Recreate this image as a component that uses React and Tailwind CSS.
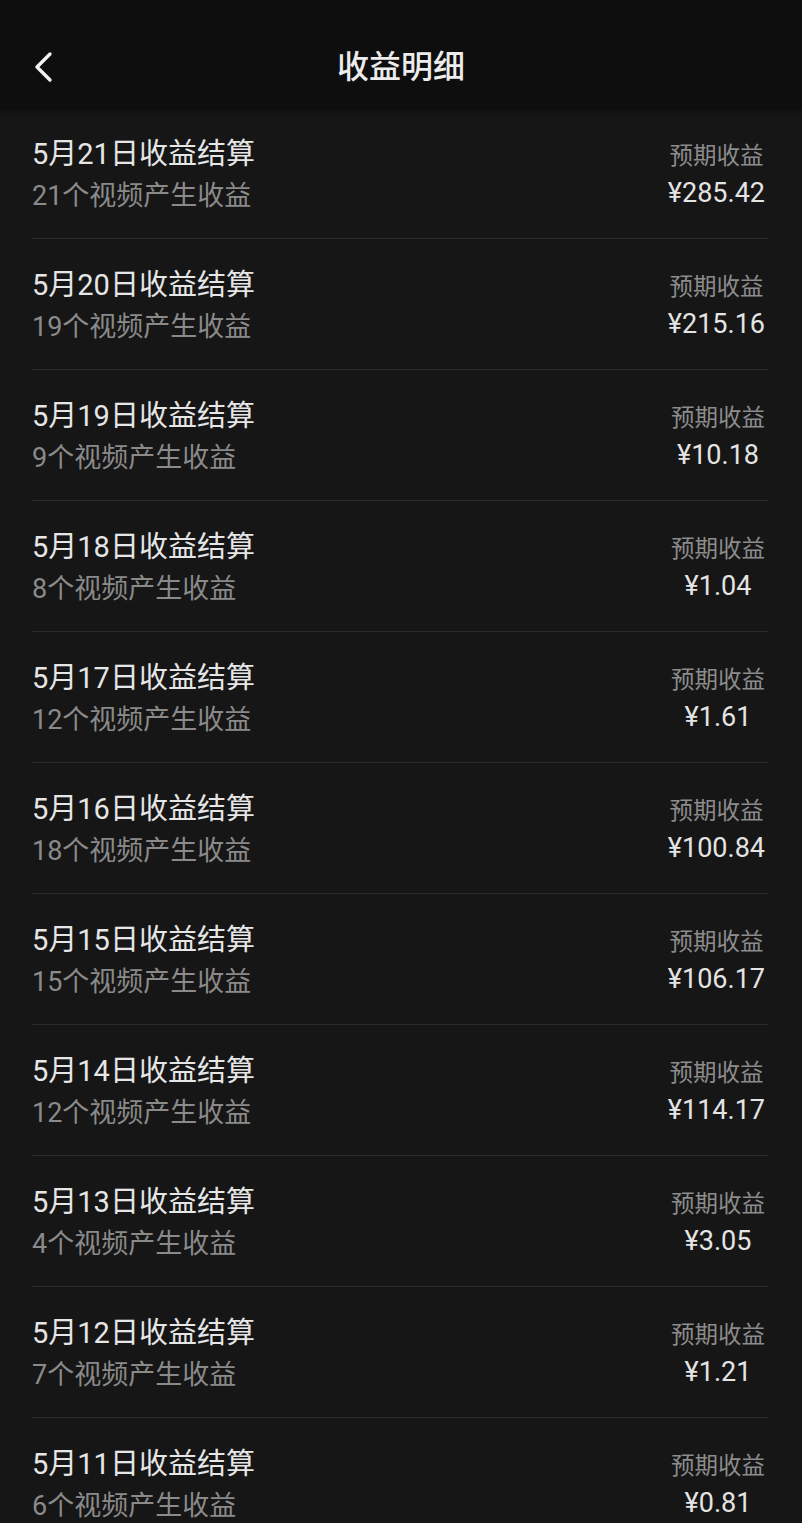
import React from 'react';

const rows = [
  { day: 21, count: 21, amount: '285.42' },
  { day: 20, count: 19, amount: '215.16' },
  { day: 19, count: 9, amount: '10.18' },
  { day: 18, count: 8, amount: '1.04' },
  { day: 17, count: 12, amount: '1.61' },
  { day: 16, count: 18, amount: '100.84' },
  { day: 15, count: 15, amount: '106.17' },
  { day: 14, count: 12, amount: '114.17' },
  { day: 13, count: 4, amount: '3.05' },
  { day: 12, count: 7, amount: '1.21' },
  { day: 11, count: 6, amount: '0.81' },
];

export default function App() {
  return (
    <div
      className="min-h-[1523px] w-[802px] bg-[#161616] overflow-hidden"
      style={{ fontFamily: 'Roboto, "Noto Sans CJK SC", "Noto Sans", sans-serif' }}
    >
      <header className="relative z-10 h-[108px] bg-[#0e0e0e] flex items-center justify-center shadow-[0_2px_6px_rgba(0,0,0,0.6)]">
        <button className="absolute left-[30px] top-[50px] w-[26px] h-[34px] flex items-center justify-center">
          <svg width="22" height="32" viewBox="0 0 22 32" fill="none">
            <path d="M18 3L5 16L18 29" stroke="#f2f2f2" strokeWidth="3.4" strokeLinecap="round" strokeLinejoin="round" />
          </svg>
        </button>
        <h1 className="text-[32px] leading-[40px] font-medium text-[#ececec] mt-[26px]">收益明细</h1>
      </header>

      <div className="ml-[32px] mr-[34px]">
        {rows.map((r) => (
          <div
            key={r.day}
            className="h-[131px] pt-[4px] border-b border-[#2a2a2a] flex items-center justify-between"
          >
            <div className="flex flex-col">
              <span className="text-[29px] leading-[42px] text-[#e6e6e6]">5月{r.day}日收益结算</span>
              <span className="text-[27px] leading-[42px] text-[#8a8a8a]">{r.count}个视频产生收益</span>
            </div>
            <div className="flex flex-col items-center mr-[3px]">
              <span className="text-[23.5px] leading-[36px] text-[#8c8c8c]">预期收益</span>
              <span className="text-[27px] leading-[38px] text-[#e4e4e4]">¥{r.amount}</span>
            </div>
          </div>
        ))}
      </div>
    </div>
  );
}
